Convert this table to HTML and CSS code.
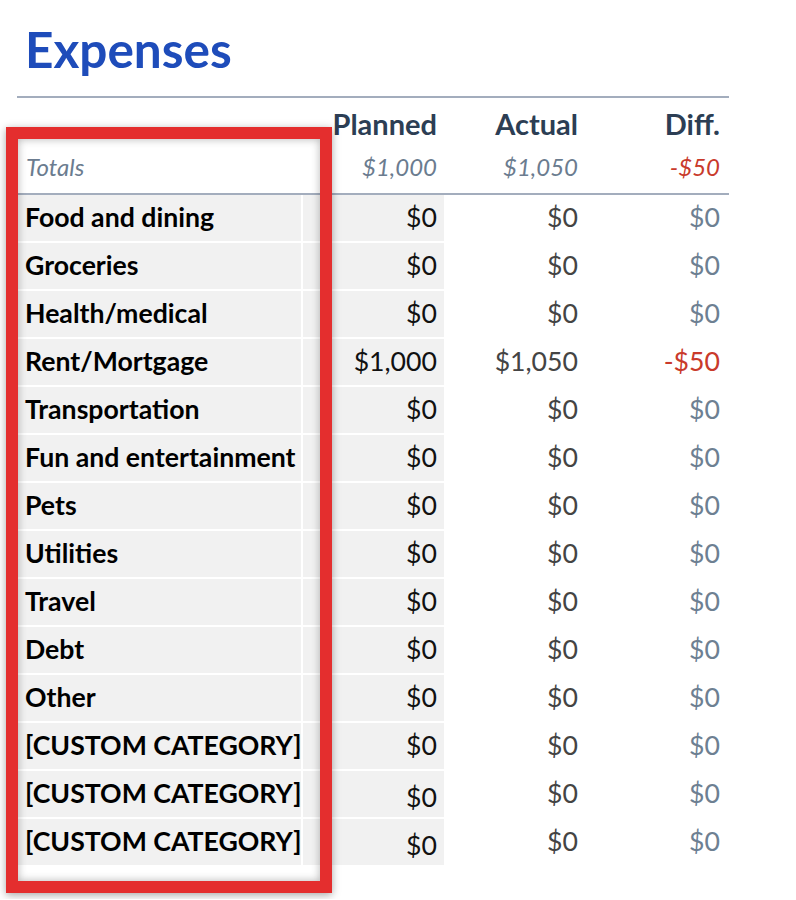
FILE: index.html
```html
<!DOCTYPE html>
<html lang="en">
<head>
    <meta charset="UTF-8">
    <meta name="viewport" content="width=device-width, initial-scale=1.0">
    <title>Expenses</title>
    <link rel="stylesheet" href="styles.css">
</head>
<body>

<div class="sheet">
    <h1>Expenses</h1>
    <table class="budget">
        <colgroup>
            <col class="col-label">
            <col class="col-num">
            <col class="col-num">
            <col class="col-diff">
        </colgroup>
        <thead>
            <tr class="heads">
                <th></th>
                <th>Planned</th>
                <th>Actual</th>
                <th>Diff.</th>
            </tr>
            <tr class="totals">
                <td class="label">Totals</td>
                <td>$1,000</td>
                <td>$1,050</td>
                <td class="neg">-$50</td>
            </tr>
        </thead>
        <tbody>
            <tr><td class="label">Food and dining</td><td class="planned">$0</td><td class="actual">$0</td><td class="diff">$0</td></tr>
            <tr><td class="label">Groceries</td><td class="planned">$0</td><td class="actual">$0</td><td class="diff">$0</td></tr>
            <tr><td class="label">Health/medical</td><td class="planned">$0</td><td class="actual">$0</td><td class="diff">$0</td></tr>
            <tr><td class="label">Rent/Mortgage</td><td class="planned">$1,000</td><td class="actual">$1,050</td><td class="diff neg">-$50</td></tr>
            <tr><td class="label">Transportation</td><td class="planned">$0</td><td class="actual">$0</td><td class="diff">$0</td></tr>
            <tr><td class="label">Fun and entertainment</td><td class="planned">$0</td><td class="actual">$0</td><td class="diff">$0</td></tr>
            <tr><td class="label">Pets</td><td class="planned">$0</td><td class="actual">$0</td><td class="diff">$0</td></tr>
            <tr><td class="label">Utilities</td><td class="planned">$0</td><td class="actual">$0</td><td class="diff">$0</td></tr>
            <tr><td class="label">Travel</td><td class="planned">$0</td><td class="actual">$0</td><td class="diff">$0</td></tr>
            <tr><td class="label">Debt</td><td class="planned">$0</td><td class="actual">$0</td><td class="diff">$0</td></tr>
            <tr><td class="label">Other</td><td class="planned">$0</td><td class="actual">$0</td><td class="diff">$0</td></tr>
            <tr><td class="label">[CUSTOM CATEGORY]</td><td class="planned">$0</td><td class="actual">$0</td><td class="diff">$0</td></tr>
            <tr><td class="label">[CUSTOM CATEGORY]</td><td class="planned low">$0</td><td class="actual">$0</td><td class="diff">$0</td></tr>
            <tr><td class="label">[CUSTOM CATEGORY]</td><td class="planned low">$0</td><td class="actual">$0</td><td class="diff">$0</td></tr>
        </tbody>
    </table>

    <!-- annotation box drawn over the category column -->
    <div class="highlight"></div>
</div>

</body>
</html>
```

FILE: styles.css
```css
body {
    font-family: Lato, "Open Sans", Arial, sans-serif;
    margin: 0;
    padding: 0;
    background-color: #fff;
    color: #111;
}
.sheet {
    position: relative;
    padding: 20px 0 32px 17px;
    width: 712px;
}
h1 {
    margin: 0 0 18px 8px;
    font-size: 49.5px;
    line-height: 58px;
    font-weight: 700;
    color: #1e4cba;
}
.budget {
    width: 712px;
    border-collapse: separate;
    border-spacing: 0;
    border-top: 2px solid #a3adbd;
    table-layout: fixed;
}
.col-label {
    width: 286px;
}
.col-num {
    width: 141px;
}
.col-diff {
    width: 144px;
}
.heads th {
    height: 40px;
    vertical-align: bottom;
    text-align: right;
    padding: 0 7px 8px 0;
    font-size: 29px;
    line-height: 29px;
    font-weight: 700;
    color: #2c3e54;
}
.heads th:last-child {
    padding-right: 9px;
}
.totals td {
    height: 41px;
    text-align: right;
    padding: 0 7px 6px 0;
    font-size: 24px;
    font-style: italic;
    color: #6b7c8f;
    border-bottom: 2px solid #a3adbd;
}
.totals td.label {
    text-align: left;
    padding-left: 9px;
}
.totals td:last-child {
    padding-right: 9px;
}
tbody td {
    height: 44px;
    padding: 0 7px 2px 0;
    text-align: right;
    font-size: 26.67px;
    line-height: 32px;
    border-bottom: 2px solid #fff;
}
tbody td.label {
    text-align: left;
    padding: 0 0 2px 8px;
    white-space: nowrap;
    font-weight: 700;
    color: #000;
    background-color: #f1f1f1;
    border-right: 2px solid #fff;
}
.planned {
    background-color: #f1f1f1;
    color: #111;
}
tbody td.low {
    height: 36px;
    padding-top: 8px;
}
.actual {
    color: #444;
}
.diff {
    color: #6d8092;
}
tbody td.diff {
    padding-right: 9px;
}
td.neg {
    color: #c93a2b;
}
.highlight {
    position: absolute;
    left: 6px;
    top: 127px;
    width: 302px;
    height: 742px;
    border: 12px solid #e42e2e;
    box-shadow: 0 2px 8px rgba(0, 0, 0, 0.35), inset 0 0 8px rgba(0, 0, 0, 0.3);
    pointer-events: none;
}
```
